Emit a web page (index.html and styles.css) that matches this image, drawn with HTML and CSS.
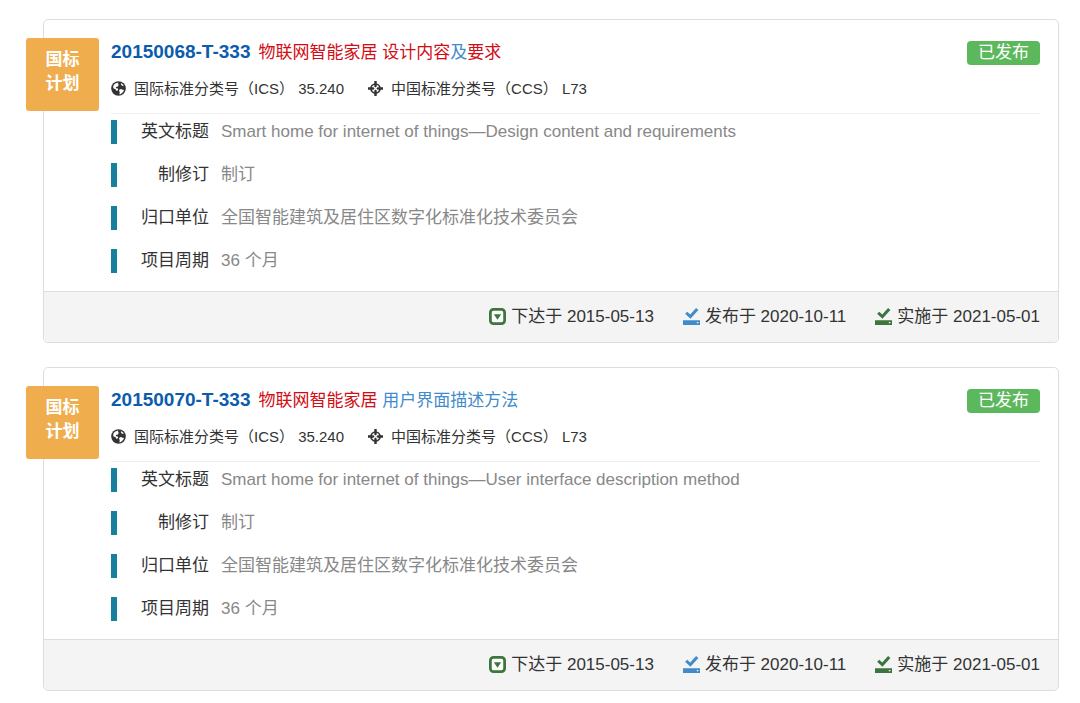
FILE: index.html
```html
<!doctype html>
<html lang="zh-CN">
<head>
<meta charset="utf-8">
<meta name="viewport" content="width=device-width, initial-scale=1.0">
<title>国标计划</title>
<link rel="stylesheet" href="styles.css">
</head>
<body>

<svg class="sprite" aria-hidden="true">
  <symbol id="icon-globe" viewBox="0 0 16 16">
    <circle cx="8" cy="8" r="7.800" fill="currentColor"/>
    <path fill="#fff" d="M4.500 2.700L8 1.700l-.8 1.500 1.300.8-1.600 2-1.700.4.1 1.300 2 .4.300 1.500-1.500 1-1.300-1.700-1.900-.9-.7-1.500C2.500 4.800 3.200 3.600 4.500 2.700zM10.500 2.200l2.300 1.600.8 1.700-1.400-.5-1.400-.8zM8.500 9.500l2-1 2 .8 1.400.2-1 2.300-2.400 2-1.500.6.300-2.400z"/>
  </symbol>
  <symbol id="icon-target" viewBox="0 0 16 16">
    <circle cx="8" cy="8" r="4.800" fill="none" stroke="currentColor" stroke-width="1.800"/>
    <path fill="currentColor" d="M6.700 0h2.600v5.800L8 7 6.700 5.800zM6.700 16h2.600v-5.800L8 9l-1.300 1.200zM0 6.700v2.600h5.800L7 8 5.800 6.700zM16 6.700v2.600h-5.800L9 8l1.200-1.300z"/>
  </symbol>
  <symbol id="icon-collapse" viewBox="0 0 16 16">
    <rect x="1.300" y="1.300" width="13.400" height="13.400" rx="3" fill="#fff" stroke="currentColor" stroke-width="2.600"/>
    <path fill="currentColor" d="M4.500 5.800h7L8 11z"/>
  </symbol>
  <symbol id="icon-saved" viewBox="0 0 16 16">
    <path fill="currentColor" d="M2 5.500l2-2L6.800 6 12.300 0l2.200 1.800L7 10z"/>
    <path fill="currentColor" fill-rule="evenodd" d="M0 11.500h16V16H0zM13 13.200v1.200h1.500v-1.200z"/>
  </symbol>
</svg>

<main class="results">

<article class="card">
  <div class="card-tag">国标<br>计划</div>
  <div class="card-body">
    <header class="card-head">
      <h2><a class="code" href="#">20150068-T-333</a><a class="name" href="#"><em>物联网智能家居</em> <em>设计内容</em>及<em>要求</em></a></h2>
      <span class="status">已发布</span>
    </header>
    <div class="meta">
      <span><svg class="icon"><use href="#icon-globe"/></svg>国际标准分类号（ICS） 35.240</span>
      <span><svg class="icon"><use href="#icon-target"/></svg>中国标准分类号（CCS） L73</span>
    </div>
    <dl class="details">
      <div><dt>英文标题</dt><dd>Smart home for internet of things—Design content and requirements</dd></div>
      <div><dt>制修订</dt><dd>制订</dd></div>
      <div><dt>归口单位</dt><dd>全国智能建筑及居住区数字化标准化技术委员会</dd></div>
      <div><dt>项目周期</dt><dd>36 个月</dd></div>
    </dl>
  </div>
  <footer class="card-foot">
    <span><svg class="icon green"><use href="#icon-collapse"/></svg>下达于 2015-05-13</span>
    <span><svg class="icon blue"><use href="#icon-saved"/></svg>发布于 2020-10-11</span>
    <span><svg class="icon green"><use href="#icon-saved"/></svg>实施于 2021-05-01</span>
  </footer>
</article>

<article class="card">
  <div class="card-tag">国标<br>计划</div>
  <div class="card-body">
    <header class="card-head">
      <h2><a class="code" href="#">20150070-T-333</a><a class="name" href="#"><em>物联网智能家居</em> 用户界面描述方法</a></h2>
      <span class="status">已发布</span>
    </header>
    <div class="meta">
      <span><svg class="icon"><use href="#icon-globe"/></svg>国际标准分类号（ICS） 35.240</span>
      <span><svg class="icon"><use href="#icon-target"/></svg>中国标准分类号（CCS） L73</span>
    </div>
    <dl class="details">
      <div><dt>英文标题</dt><dd>Smart home for internet of things—User interface description method</dd></div>
      <div><dt>制修订</dt><dd>制订</dd></div>
      <div><dt>归口单位</dt><dd>全国智能建筑及居住区数字化标准化技术委员会</dd></div>
      <div><dt>项目周期</dt><dd>36 个月</dd></div>
    </dl>
  </div>
  <footer class="card-foot">
    <span><svg class="icon green"><use href="#icon-collapse"/></svg>下达于 2015-05-13</span>
    <span><svg class="icon blue"><use href="#icon-saved"/></svg>发布于 2020-10-11</span>
    <span><svg class="icon green"><use href="#icon-saved"/></svg>实施于 2021-05-01</span>
  </footer>
</article>

</main>
</body>
</html>
```
FILE: styles.css
```css
* {
  box-sizing: border-box;
}
body {
  margin: 0;
  background: #fff;
  color: #333;
  font-family: "Liberation Sans", Arial, "Noto Sans CJK SC", sans-serif;
  font-size: 17px;
  line-height: 24px;
}
a {
  text-decoration: none;
}
.sprite {
  position: absolute;
  width: 0;
  height: 0;
}
.results {
  padding: 19px 21px 12px 43px;
  display: flex;
  flex-direction: column;
  gap: 24px;
}

.card {
  position: relative;
  border: 1px solid #ddd;
  border-radius: 5px;
}
/* orange tag hangs over the left border */
.card-tag {
  position: absolute;
  left: -18px;
  top: 18px;
  width: 73px;
  height: 73px;
  padding-top: 10px;
  border-radius: 3px;
  background: #f0ad4e;
  color: #fff;
  font-weight: bold;
  text-align: center;
}
.card-body {
  padding: 20px 18px 18px 67px;
}
.card-head {
  display: flex;
  justify-content: space-between;
  align-items: center;
}
.card-head h2 {
  margin: 0;
  font-size: 17px;
  font-weight: normal;
}
.code {
  margin-right: 8px;
  color: #0b5cad;
  font-size: 19px;
  font-weight: bold;
}
.name {
  color: #428bca;
}
.name em {
  color: #d10d15;
  font-style: normal;
}
.status {
  padding: 0 11px;
  border-radius: 4px;
  background: #5cb85c;
  color: #fff;
}

.meta {
  display: flex;
  gap: 24px;
  padding: 12px 0;
  border-bottom: 1px solid #eee;
  font-size: 15px;
}
.icon {
  flex: none;
  width: 15px;
  height: 15px;
  margin: 0 8px 2px 0;
}
.meta span, .card-foot span {
  display: flex;
  align-items: center;
}

.details {
  margin: 0;
  padding-top: 6px;
  display: flex;
  flex-direction: column;
  gap: 19px;
}
.details div {
  display: flex;
  border-left: 6px solid #17809f;
}
.details dt {
  width: 92px;
  text-align: right;
}
.details dd {
  margin: 0 0 0 12px;
  color: #888;
}

.card-foot {
  display: flex;
  justify-content: flex-end;
  gap: 29px;
  padding: 13px 18px;
  border-top: 1px solid #ddd;
  border-radius: 0 0 4px 4px;
  background: #f4f4f4;
}
.card-foot .icon {
  width: 17px;
  height: 17px;
  margin-right: 5px;
}
.green {
  color: #3c763d;
}
.blue {
  color: #428bca;
}
```
